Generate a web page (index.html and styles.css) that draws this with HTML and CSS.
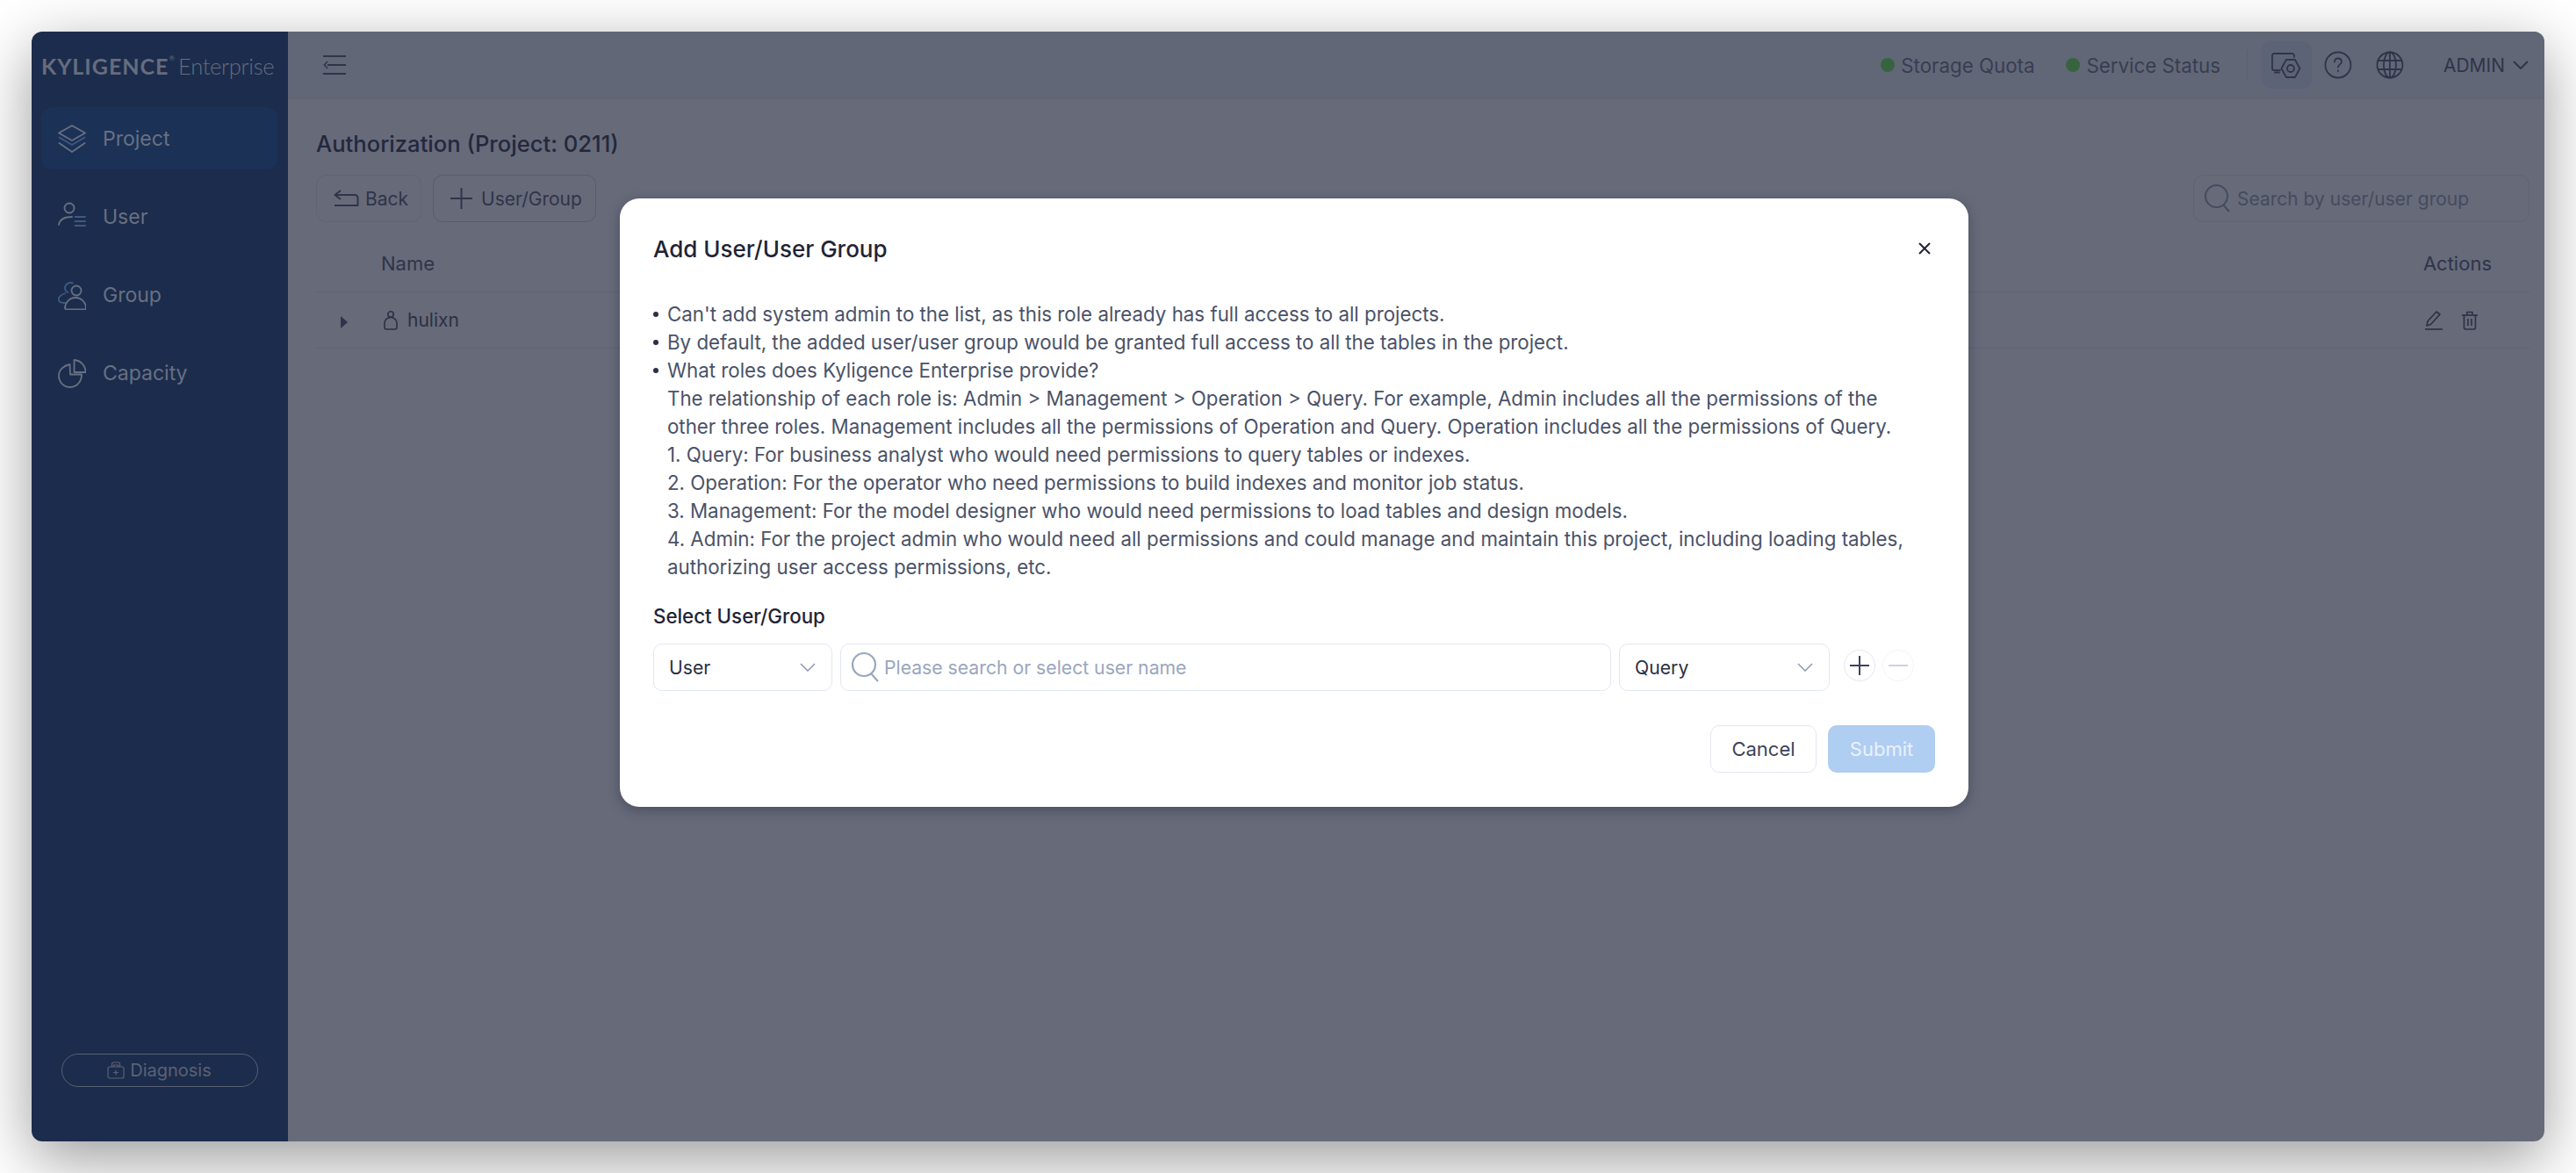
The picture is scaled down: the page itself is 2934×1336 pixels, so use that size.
FILE: index.html
```html
<!DOCTYPE html>
<html lang="en">
<head>
    <meta charset="UTF-8">
    <title>Kyligence Enterprise - Authorization</title>
    <link rel="stylesheet" href="styles.css">
</head>
<body>
    <div class="window">
        <aside class="sidebar">
            <div class="logo"><b>KYLIGENCE</b><sup>®</sup><span>Enterprise</span></div>
            <nav class="nav">
                <a class="nav-item active">
                    <svg class="nav-icon" viewBox="0 0 32 34" fill="none" stroke="currentColor" stroke-width="1.8" stroke-linejoin="round" stroke-linecap="round"><path d="M16 2 31 10.500 16 19 1 10.500Z"/><path class="accent" d="M1.500 15.500 16 24 30.500 15.500"/><path d="M1.500 22 16 32 30.500 22"/></svg>
                    Project
                </a>
                <a class="nav-item">
                    <svg class="nav-icon" viewBox="0 0 32 34" fill="none" stroke="currentColor" stroke-width="1.8" stroke-linecap="round"><circle cx="13" cy="7" r="5.500"/><path d="M1 26C2 20 8 17 16 17"/><path class="accent" d="M19.500 17H31M19.500 22H31M19.500 27H31"/></svg>
                    User
                </a>
                <a class="nav-item">
                    <svg class="nav-icon" viewBox="0 0 32 34" fill="none" stroke="currentColor" stroke-width="1.8" stroke-linecap="round" stroke-linejoin="round"><circle cx="21" cy="12" r="5.500"/><path class="accent" d="M17 3.500C13 2 8.500 4.500 8 8c-.3 3 1.500 5 3 6"/><path class="accent" d="M8 15C3 17 0 20 1 23c.5 2 3 3 7 3"/><path d="M8 32c0-6 5-12 12-12s12 6 12 12c0 1-1 1.500-2 1.500H10c-1 0-2-.5-2-1.500Z"/></svg>
                    Group
                </a>
                <a class="nav-item">
                    <svg class="nav-icon" viewBox="0 0 32 34" fill="none" stroke="currentColor" stroke-width="1.8" stroke-linejoin="round"><path d="M13.500 7C6 8.500 1 13.500 1 20c0 7.500 6 13 13 13s13-6 13-14.500H14Z"/><path d="M18.500 2v14H31.500C31.500 8.500 26 2.500 18.500 2Z"/></svg>
                    Capacity
                </a>
            </nav>
            <button class="diagnosis">
                <svg class="diag-icon" viewBox="0 0 20 20" fill="none" stroke="currentColor" stroke-width="1.200" stroke-linejoin="round" stroke-linecap="round"><rect x="1" y="6" width="18" height="13" rx="2"/><path d="M5.500 6V3a2 2 0 0 1 2-2h5a2 2 0 0 1 2 2v3"/><path d="M7.500 6V4h5v2"/><path d="M10 10v5M7.500 12.500h5"/></svg>
                Diagnosis
            </button>
        </aside>

        <main class="main">
            <header class="topbar">
                <svg class="menu-icon" viewBox="0 0 26 22" fill="none" stroke="currentColor" stroke-width="2"><path d="M0 1h26M5 11h21M0 21h26"/><path d="M5 7 1.500 11 5 15" stroke-width="1.500"/></svg>
                <div class="top-right">
                    <span class="status"><i class="dot"></i>Storage Quota</span>
                    <span class="status"><i class="dot"></i>Service Status</span>
                    <span class="divider"></span>
                    <span class="icon-btn active">
                        <svg viewBox="0 0 34 29" width="34" height="29" fill="none" stroke="currentColor" stroke-width="1.800" stroke-linejoin="round" stroke-linecap="round"><path d="M26 5V3.500A2.500 2.500 0 0 0 23.500 1H3.500A2.500 2.500 0 0 0 1 3.500V18a2 2 0 0 0 2 2h7"/><path d="M4 22.500h5"/><path d="M17 8h10l5.500 10L27 28H17l-5.500-10Z"/><circle cx="22" cy="18" r="4"/></svg>
                    </span>
                    <span class="icon-btn">
                        <svg viewBox="0 0 32 32" width="32" height="32" fill="none" stroke="currentColor" stroke-width="1.800" stroke-linecap="round"><circle cx="16" cy="16" r="14.500"/><path d="M12 12.500c0-2.500 1.800-4 4-4s4 1.500 4 3.800c0 3-4 3.200-4 6.200"/><path d="M16 22.500v.5"/></svg>
                    </span>
                    <span class="icon-btn">
                        <svg viewBox="0 0 32 32" width="32" height="32" fill="none" stroke="currentColor" stroke-width="1.800"><circle cx="16" cy="16" r="14.500"/><ellipse cx="16" cy="16" rx="7" ry="14.500"/><path d="M16 1.500v29M2 11h28M2 21h28"/></svg>
                    </span>
                    <span class="admin">ADMIN
                        <svg viewBox="0 0 18 10" width="18" height="10" fill="none" stroke="currentColor" stroke-width="2"><path d="M1 1l8 8 8-8"/></svg>
                    </span>
                </div>
            </header>

            <section class="content">
                <h1 class="page-title">Authorization (Project: 0211)</h1>
                <div class="toolbar">
                    <button class="btn btn-back">
                        <svg viewBox="0 0 30 20" width="30" height="20" fill="none" stroke="currentColor" stroke-width="2" stroke-linejoin="round"><path d="M8 1 1.500 6 8 11"/><path d="M2 6h22a3.500 3.500 0 0 1 3.500 3.500V18H1"/></svg>
                        Back
                    </button>
                    <button class="btn btn-add">
                        <svg viewBox="0 0 25 24" width="25" height="24" fill="none" stroke="currentColor" stroke-width="2"><path d="M12.500 0v24M0 12h25"/></svg>
                        User/Group
                    </button>
                    <div class="search">
                        <svg viewBox="0 0 30 32" width="30" height="32" fill="none" stroke="currentColor" stroke-width="2"><circle cx="13.500" cy="13.500" r="12.500"/><path d="M21 23l7 8"/></svg>
                        Search by user/user group
                    </div>
                </div>
                <div class="table-head">
                    <span>Name</span>
                    <span>Actions</span>
                </div>
                <div class="table-row">
                    <i class="caret"></i>
                    <svg class="user-icon" viewBox="0 0 16 22" fill="none" stroke="currentColor" stroke-width="1.600"><circle cx="8" cy="4" r="3.200"/><path d="M1 19v-5a7 6.500 0 0 1 14 0v5a2 2 0 0 1-2 2H3a2 2 0 0 1-2-2Z"/></svg>
                    <span class="user-name">hulixn</span>
                    <span class="row-actions">
                        <svg viewBox="0 0 20 22" width="20" height="22" fill="none" stroke="currentColor" stroke-width="1.600" stroke-linejoin="round"><path d="M2 17 3 12 13 1l4 3L6.500 15.500Z"/><path d="M0 21h20"/></svg>
                        <svg viewBox="0 0 20 22" width="20" height="22" fill="none" stroke="currentColor" stroke-width="1.600" stroke-linejoin="round"><path d="M1 5h18"/><path d="M7 5V1.500h6V5"/><path d="M3.500 5v14a2 2 0 0 0 2 2h9a2 2 0 0 0 2-2V5"/><path d="M8 9v8M12 9v8"/></svg>
                    </span>
                </div>
            </section>
        </main>

        <div class="dialog">
            <div class="dialog-head">
                <h2>Add User/User Group</h2>
                <svg class="close" viewBox="0 0 14 14" fill="none" stroke="currentColor" stroke-width="2"><path d="M1 1l12 12M13 1 1 13"/></svg>
            </div>
            <ul class="tips">
                <li>Can't add system admin to the list, as this role already has full access to all projects.</li>
                <li>By default, the added user/user group would be granted full access to all the tables in the project.</li>
                <li>What roles does Kyligence Enterprise provide?<br>
                    The relationship of each role is: Admin &gt; Management &gt; Operation &gt; Query. For example, Admin includes all the permissions of the other three roles. Management includes all the permissions of Operation and Query. Operation includes all the permissions of Query.<br>
                    1. Query: For business analyst who would need permissions to query tables or indexes.<br>
                    2. Operation: For the operator who need permissions to build indexes and monitor job status.<br>
                    3. Management: For the model designer who would need permissions to load tables and design models.<br>
                    4. Admin: For the project admin who would need all permissions and could manage and maintain this project, including loading tables, authorizing user access permissions, etc.
                </li>
            </ul>
            <div class="field-label">Select User/Group</div>
            <div class="field-row">
                <div class="select select-type">User
                    <svg viewBox="0 0 18 10" width="18" height="10" fill="none" stroke="currentColor" stroke-width="1.500"><path d="M1 1l8 8 8-8"/></svg>
                </div>
                <div class="input-search">
                    <svg viewBox="0 0 32 34" width="32" height="34" fill="none" stroke="currentColor" stroke-width="2.200"><circle cx="14" cy="14" r="13"/><path d="M22 24l8 9"/></svg>
                    Please search or select user name
                </div>
                <div class="select select-role">Query
                    <svg viewBox="0 0 18 10" width="18" height="10" fill="none" stroke="currentColor" stroke-width="1.500"><path d="M1 1l8 8 8-8"/></svg>
                </div>
                <span class="round-btn">
                    <svg viewBox="0 0 22 22" width="22" height="22" fill="none" stroke="currentColor" stroke-width="2"><path d="M11 0v22M0 11h22"/></svg>
                </span>
                <span class="round-btn disabled">
                    <svg viewBox="0 0 22 22" width="22" height="22" fill="none" stroke="currentColor" stroke-width="2"><path d="M0 11h22"/></svg>
                </span>
            </div>
            <div class="dialog-foot">
                <button class="btn-cancel">Cancel</button>
                <button class="btn-submit">Submit</button>
            </div>
        </div>
    </div>
</body>
</html>
```

FILE: styles.css
```css
* {
    box-sizing: border-box;
}

html, body {
    height: 100%;
}

body {
    margin: 0;
    padding: 36px;
    background-color: #fff;
    font-family: 'Inter', 'Liberation Sans', sans-serif;
    font-size: 22.3px;
    overflow: hidden;
}

button {
    font-family: inherit;
}

.window {
    position: relative;
    display: flex;
    height: 1264px;
    border-radius: 12px;
    box-shadow: 0 20px 70px rgba(0, 0, 0, 0.4);
}

/* Sidebar */
.sidebar {
    width: 292px;
    flex-shrink: 0;
    display: flex;
    flex-direction: column;
    padding: 0 12px 62px 11px;
    background-color: #1c2c4c;
    border-radius: 12px 0 0 12px;
    color: #687082;
}

.logo {
    height: 77px;
    display: flex;
    align-items: center;
    white-space: pre;
    font-family: 'Lato', sans-serif;
    color: #666d7d;
}

.logo b {
    font-size: 25px;
    font-weight: 700;
    letter-spacing: 1px;
}

.logo sup {
    align-self: flex-start;
    margin: 25px 4px 0 0;
    font-size: 8px;
}

.logo span {
    font-size: 25.500px;
    font-weight: 300;
    letter-spacing: -0.3px;
}

.nav {
    margin-top: 9px;
    flex: 1;
}

.nav-item {
    display: flex;
    align-items: center;
    height: 71px;
    margin-bottom: 18px;
    padding-left: 19px;
    border-radius: 12px;
    font-size: 23px;
}

.nav-item.active {
    background-color: #1b3156;
}

.nav-icon {
    width: 32px;
    height: 34px;
    margin-right: 19px;
}

.accent {
    stroke: #3f5a80;
}

.diagnosis {
    align-self: center;
    display: flex;
    align-items: center;
    justify-content: center;
    gap: 6px;
    width: 224px;
    height: 38px;
    background: none;
    border: 1px solid #585f71;
    border-radius: 19px;
    color: #5b6273;
    font-size: 20px;
}

.diag-icon {
    width: 20px;
    height: 20px;
}

/* Main area */
.main {
    flex: 1;
    display: flex;
    flex-direction: column;
    background-color: #676a79;
    border-radius: 0 12px 12px 0;
    color: #2b3044;
}

.topbar {
    height: 77px;
    display: flex;
    align-items: center;
    justify-content: space-between;
    padding: 0 18px 0 40px;
    background-color: #626777;
    border-bottom: 1px solid #5f6476;
    border-radius: 0 12px 0 0;
    color: #2f344a;
}

.menu-icon {
    width: 26px;
    height: 22px;
}

.top-right {
    display: flex;
    align-items: center;
}

.status {
    display: flex;
    align-items: center;
    margin-right: 36px;
    color: #383d52;
}

.dot {
    width: 16px;
    height: 16px;
    margin-right: 7px;
    border-radius: 50%;
    background-color: #37643f;
}

.divider {
    width: 1px;
    height: 34px;
    margin-left: -6px;
    margin-right: 16px;
    background-color: #5c6172;
}

.icon-btn {
    display: flex;
    align-items: center;
    justify-content: center;
    width: 57px;
    height: 54px;
    margin-right: 2px;
    border-radius: 10px;
}

.icon-btn.active {
    background-color: #5d6377;
}

.admin {
    display: flex;
    align-items: center;
    gap: 9px;
    margin-left: 30px;
    font-size: 21px;
}

.content {
    padding: 0 17px 0 32px;
    font-size: 21px;
}

.page-title {
    margin: 33px 0 0;
    font-size: 25.6px;
    line-height: 36px;
    font-weight: 500;
    color: #23283d;
}

.toolbar {
    display: flex;
    align-items: center;
    margin-top: 17px;
}

.btn {
    display: flex;
    align-items: center;
    height: 54px;
    background: none;
    border-radius: 11px;
    font-size: 21px;
    color: #2f344a;
}

.btn-back {
    gap: 6px;
    width: 120px;
    padding: 0 0 0 19px;
    border: 1px solid #5f6376;
}

.btn-add {
    gap: 10px;
    width: 186px;
    margin-left: 13px;
    padding: 0 0 0 19px;
    border: 1px solid #565b70;
}

.search {
    display: flex;
    align-items: center;
    gap: 7px;
    width: 383px;
    height: 54px;
    margin-left: auto;
    padding-left: 12px;
    border: 1px solid #5f6376;
    border-radius: 11px;
    color: #454b5f;
}

.search svg {
    color: #444b60;
}

.table-head {
    display: flex;
    justify-content: space-between;
    align-items: center;
    height: 80px;
    padding: 15px 43px 0 74px;
    border-bottom: 1px solid #5e6377;
    font-size: 22px;
    color: #2f344a;
}

.table-row {
    display: flex;
    align-items: center;
    height: 64px;
    border-bottom: 1px solid #5e6377;
}

.caret {
    width: 0;
    height: 0;
    margin-left: 28px;
    margin-top: 4px;
    border-left: 8px solid #2f344a;
    border-top: 7px solid transparent;
    border-bottom: 7px solid transparent;
}

.user-icon {
    width: 16px;
    height: 22px;
    margin-left: 41px;
}

.user-name {
    margin-left: 11px;
}

.row-actions {
    display: flex;
    gap: 21px;
    margin-left: auto;
    margin-right: 58px;
}

/* Dialog */
.dialog {
    position: absolute;
    left: 670px;
    top: 190px;
    width: 1536px;
    height: 693px;
    padding: 0 38px;
    background-color: #fff;
    border-radius: 22px;
    box-shadow: 0 4px 14px rgba(20, 25, 45, 0.35);
    color: #2b3044;
}

.dialog-head {
    display: flex;
    align-items: center;
    justify-content: space-between;
    height: 114px;
    margin-bottom: 2px;
    padding-right: 5px;
}

.dialog-head h2 {
    margin: 0;
    font-size: 26px;
    font-weight: 500;
    color: #1f2436;
}

.close {
    width: 14px;
    height: 14px;
    color: #1f2436;
}

.tips {
    margin: 0;
    padding: 0 30px 0 0;
    list-style: none;
    line-height: 32px;
    color: #4a5268;
}

.tips li {
    position: relative;
    padding-left: 16px;
}

.tips li::before {
    content: "";
    position: absolute;
    left: 0;
    top: 13px;
    width: 6px;
    height: 6px;
    border-radius: 50%;
    background-color: #2b3044;
}

.field-label {
    margin-top: 24px;
    line-height: 32px;
    font-weight: 500;
    color: #1f2436;
}

.field-row {
    display: flex;
    align-items: center;
    margin-top: 15px;
    padding-right: 24px;
    font-size: 21.200px;
}

.select, .input-search {
    display: flex;
    align-items: center;
    height: 54px;
    border: 1px solid #e3e7f2;
    border-radius: 10px;
}

.select {
    justify-content: space-between;
    padding: 0 18px 0 17px;
}

.select svg {
    color: #8e99b2;
}

.select-type {
    width: 204px;
}

.input-search {
    flex: 1;
    gap: 5px;
    margin: 0 9px;
    padding-left: 12px;
    color: #9aa6bd;
}

.select-role {
    width: 240px;
}

.round-btn {
    display: flex;
    align-items: center;
    justify-content: center;
    width: 36px;
    height: 36px;
    margin-left: 16px;
    margin-top: -5px;
    border: 1px solid #e3e7f2;
    border-radius: 50%;
    color: #3c445b;
}

.round-btn.disabled {
    margin-left: 8px;
    border-color: #f2f4f8;
    color: #ccd2de;
}

.dialog-foot {
    display: flex;
    justify-content: flex-end;
    gap: 13px;
    margin-top: 39px;
}

.btn-cancel, .btn-submit {
    height: 54px;
    border-radius: 10px;
    font-size: 22px;
}

.btn-cancel {
    width: 121px;
    background: #fff;
    border: 1px solid #e3e7f2;
    color: #3c445b;
}

.btn-submit {
    width: 122px;
    background-color: #b0cdf2;
    border: none;
    color: #eaf2fd;
}
```
